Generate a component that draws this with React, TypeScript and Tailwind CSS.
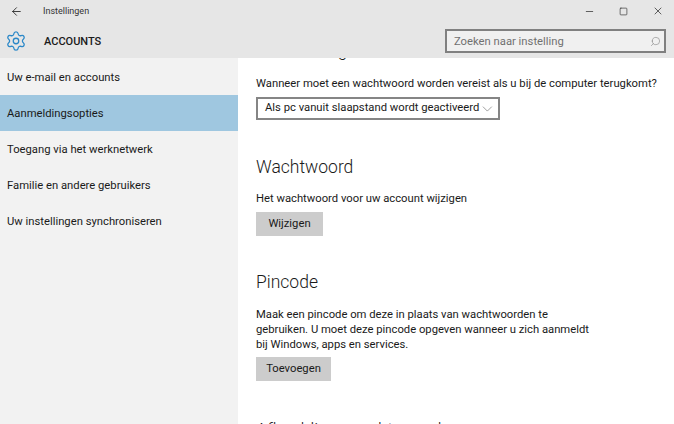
import { ArrowLeft, Minus, Search, Settings, Square, X, ChevronDown } from "lucide-react";

const accountPages = [
  "Uw e-mail en accounts",
  "Aanmeldingsopties",
  "Toegang via het werknetwerk",
  "Familie en andere gebruikers",
  "Uw instellingen synchroniseren"
];

function GrayButton({ label, sizing }: { label: string; sizing: string }) {
  return (
    <button className={`block h-6 bg-[#cccccc] text-center text-[#1a1a1a] ${sizing}`}>{label}</button>
  );
}

export default function App() {
  return (
    <div
      className="flex h-[424px] w-[674px] flex-col overflow-hidden bg-white text-[11.25px] text-[#1a1a1a]"
      style={{ fontFamily: 'Roboto, "Noto Sans", sans-serif' }}
    >
      <header className="h-[58px] shrink-0 bg-[#e6e6e6]">
        <div className="flex h-[22px] items-center">
          <ArrowLeft size={13} strokeWidth={1.5} className="ml-[10px]" />
          <span className="mt-[2px] ml-[20px] text-[9px] text-[#333333]">Instellingen</span>
          <div className="ml-auto flex items-center text-[#222222]">
            <Minus size={11} strokeWidth={1.5} />
            <Square size={9} strokeWidth={1.6} className="ml-[24px]" />
            <X size={12} strokeWidth={1.4} className="mr-[10px] ml-[24px]" />
          </div>
        </div>
        <div className="flex h-[36px] items-start">
          <Settings size={22} strokeWidth={1.4} className="mt-[8px] ml-[5px] text-[#2b88c8]" />
          <span className="mt-[12px] ml-[17px] text-[11px] font-medium text-[#1a1a1a]">ACCOUNTS</span>
          <div className="mt-[7px] mr-[8px] ml-auto flex h-[24px] w-[221px] items-center border-2 border-[#808080] bg-[#f0f0f0] pr-[3px] pl-[7px] text-[#707070]">
            <span className="mt-[2px]">Zoeken naar instelling</span>
            <Search size={11} strokeWidth={1.4} className="ml-auto -scale-x-100 text-[#8a8a8a]" />
          </div>
        </div>
      </header>
      <div className="flex min-h-0 flex-1">
        <nav className="w-[238px] shrink-0 bg-[#f2f2f2] pt-px">
          {accountPages.map((page) => (
            <div key={page} className={`flex h-9 items-center pt-[2px] pl-[7px] ${page === "Aanmeldingsopties" ? "bg-[#9fc7e0]" : ""}`}>
              {page}
            </div>
          ))}
        </nav>
        <main className="min-w-0 flex-1 overflow-hidden pl-[18px]">
          <h2 className="-mt-[22px] h-[28px] text-[17.5px] leading-[28px] font-light">Aanmelding vereist</h2>
          <p className="mt-[12px] leading-[16px] whitespace-nowrap">
            Wanneer moet een wachtwoord worden vereist als u bij de computer terugkomt?
          </p>
          <div className="mt-[5px] flex h-[23px] w-[244px] items-center border-2 border-[#858585] pr-[2px] pl-[7px]">
            <span className="whitespace-nowrap">Als pc vanuit slaapstand wordt geactiveerd</span>
            <ChevronDown size={18} strokeWidth={0.8} className="ml-auto text-[#555555]" />
          </div>

          <h2 className="mt-[33px] h-[28px] text-[17.5px] leading-[28px] font-light">Wachtwoord</h2>
          <p className="mt-[10px] leading-[16px]">Het wachtwoord voor uw account wijzigen</p>
          <GrayButton label="Wijzigen" sizing="mt-[5px] w-[67px]" />

          <h2 className="mt-[32px] h-[28px] text-[17.5px] leading-[28px] font-light">Pincode</h2>
          <p className="mt-[11px] w-[340px] leading-[15px]">
            Maak een pincode om deze in plaats van wachtwoorden te gebruiken. U moet deze pincode opgeven wanneer u zich aanmeldt bij Windows, apps en services.
          </p>
          <GrayButton label="Toevoegen" sizing="mt-[5px] w-[75px]" />

          <h2 className="mt-[35px] h-[28px] text-[17.5px] leading-[28px] font-light">Afbeeldingswachtwoord</h2>
        </main>
      </div>
    </div>
  );
}
